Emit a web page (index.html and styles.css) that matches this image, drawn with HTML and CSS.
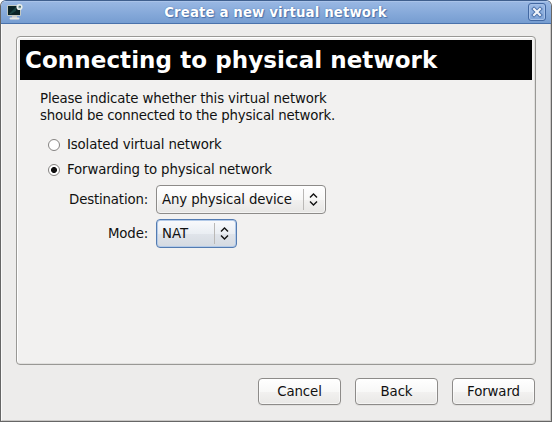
FILE: index.html
```html
<!DOCTYPE html>
<html lang="en">
<head>
<meta charset="utf-8">
<title>Create a new virtual network</title>
<link rel="stylesheet" href="styles.css">
</head>
<body>
<div class="window">
  <header class="titlebar">
    <svg class="app-icon" width="18" height="18" viewBox="0 0 18 18">
      <path d="M6 13h5v2H6z" fill="#c9cbc8"/>
      <path d="M4.500 15.500h8" stroke="#e6e7e4" stroke-width="2" stroke-linecap="round"/>
      <rect x="1.500" y="2.500" width="13" height="10" rx="0.500" fill="#d5d8d4" stroke="#c3c9c4"/>
      <rect x="2" y="3" width="12" height="9" fill="#0b2326"/>
      <path d="M3 11L10 4v4l-5 3z" fill="#1b4444"/>
      <circle cx="13.500" cy="4" r="2.300" fill="#9fb8b9" stroke="#e9edea" stroke-width="1.600"/>
      <circle cx="14" cy="3.700" r="0.900" fill="#426568"/>
    </svg>
    <h1 class="title">Create a new virtual network</h1>
    <button class="close" aria-label="Close">
      <svg width="12" height="12" viewBox="0 0 12 12">
        <path d="M3 3l6 6M9 3l-6 6" stroke="#4a70a9" stroke-width="4" stroke-linecap="square"/>
        <path d="M2.300 2.300l7.400 7.400M9.700 2.300l-7.400 7.400" stroke="#f0f4fa" stroke-width="2.200"/>
      </svg>
    </button>
  </header>
  <main class="content">
    <section class="page">
      <h2 class="banner">Connecting to physical network</h2>
      <div class="form">
        <p class="intro"><span class="intro-first">Please indicate whether this virtual network</span><br>should be connected to the physical network.</p>
        <div class="option"><span class="radio"></span><span>Isolated virtual network</span></div>
        <div class="option"><span class="radio checked"></span><span>Forwarding to physical network</span></div>
        <div class="fields">
          <span class="label">Destination:</span>
          <div class="combo combo-wide"><span class="value">Any physical device</span><span class="arrows"><svg width="9" height="13" viewBox="0 0 9 13"><path d="M1 4.500L4.500 1L8 4.500M1 8.500L4.500 12L8 8.500"/></svg></span></div>
          <span class="label">Mode:</span>
          <div class="combo combo-focus"><span class="value">NAT</span><span class="arrows"><svg width="9" height="13" viewBox="0 0 9 13"><path d="M1 4.500L4.500 1L8 4.500M1 8.500L4.500 12L8 8.500"/></svg></span></div>
        </div>
      </div>
    </section>
    <footer class="actions">
      <button class="btn">Cancel</button>
      <button class="btn">Back</button>
      <button class="btn">Forward</button>
    </footer>
  </main>
</div>
</body>
</html>
```
FILE: styles.css
```css
* { box-sizing: border-box; }

body {
  margin: 0;
  background: #fff;
  color: #111;
  font: 13.333px/17px "DejaVu Sans", sans-serif;
}

.window {
  width: 552px;
  height: 422px;
  display: flex;
  flex-direction: column;
  border: 1px solid #666;
  border-top-color: #3f5f8e;
  border-radius: 6px 6px 0 0;
  background: #edeceb;
  overflow: hidden;
}

.titlebar {
  height: 23px;
  display: flex;
  align-items: center;
  padding: 0 5px;
  border-top: 1px solid #a9c3e9;
  border-bottom: 1px solid #4a72ab;
  background: linear-gradient(#98b7e3, #769dd1);
}

.app-icon {
  display: block;
  margin: -1px 0 1px;
}

.title {
  flex: 1;
  margin: 0;
  padding-right: 1px;
  text-align: center;
  color: #fff;
  font-size: 13.333px;
  line-height: 20px;
  font-weight: bold;
  letter-spacing: 0.12px;
  text-shadow: 0 0 1px #3c64a0, 1px 1px 1px #4a72ab;
}

.close {
  width: 18px;
  height: 18px;
  margin: -1px 0 1px;
  padding: 0;
  display: flex;
  align-items: center;
  justify-content: center;
  border: 1px solid #4268a2;
  border-radius: 3px;
  background: linear-gradient(#9cbae5, #7da2d6);
  box-shadow: inset 0 0 0 1px #a5c0e7;
}

.content {
  flex: 1;
  display: flex;
  flex-direction: column;
  padding: 12px 15px 15px 14px;
  border: 1px solid #fafafa;
  border-width: 0 1px 1px;
  border-right-color: #c9c7c5;
  border-bottom-color: #c9c7c5;
}

.page {
  height: 329px;
  width: 520px;
  padding: 3px;
  border: 1px solid #999895;
  border-radius: 4px;
  background: #f2f1f0;
  box-shadow: inset 1px 1px 0 #fff, inset -1px -1px 0 #e1e0de;
}

.banner {
  height: 40px;
  margin: 0;
  padding-left: 5px;
  background: #000;
  color: #fff;
  font-size: 23px;
  line-height: 40px;
  font-weight: bold;
  letter-spacing: 0.07px;
  white-space: nowrap;
}

.form { padding: 10px 0 0 20px; }

.intro {
  margin: 0 0 8px;
  letter-spacing: -0.21px;
}

.intro-first { letter-spacing: -0.16px; }

.option {
  height: 25px;
  display: flex;
  align-items: center;
  gap: 7px;
  padding-left: 8px;
  letter-spacing: -0.14px;
}

.radio {
  width: 12px;
  height: 12px;
  margin-top: 1px;
  border: 1px solid #858381;
  border-radius: 50%;
  background: #fff;
}

.radio.checked { background: radial-gradient(circle at center, #111 0 2.600px, #fff 3.400px); }

.fields {
  display: grid;
  grid-template-columns: 108px 170px;
  grid-template-rows: 29px 29px;
  column-gap: 8px;
  row-gap: 5px;
  align-items: center;
  margin-top: 3px;
}

.label {
  text-align: right;
  letter-spacing: -0.17px;
}

.combo {
  height: 29px;
  display: flex;
  align-items: center;
  justify-content: space-between;
  padding: 3px 7px 3px 5px;
  border: 1px solid #8d8b89;
  border-radius: 4px;
  background: linear-gradient(#fff 0%, #f8f8f7 50%, #f2f1f0 51%, #e7e6e4 100%);
  box-shadow: inset 0 0 0 1px #fff8;
}

.combo-wide {
  width: 170px;
  letter-spacing: -0.13px;
}

.combo-focus {
  width: 81px;
  border-color: #537bb1;
  background: linear-gradient(#f9fafc 0%, #eaeef3 50%, #e0e4ea 51%, #d5dae1 100%);
  box-shadow: inset 0 0 0 1px #b3cae8;
}

.arrows {
  height: 21px;
  display: flex;
  align-items: center;
  padding-left: 5px;
  border-left: 1px solid #bab8b6;
}

.arrows path {
  fill: none;
  stroke: #111;
  stroke-width: 1.400;
}

.actions {
  display: flex;
  justify-content: flex-end;
  gap: 14px;
  margin-top: 13px;
}

.btn {
  width: 83px;
  height: 27px;
  padding: 0 0 1px;
  border: 1px solid #8d8b89;
  border-radius: 4px;
  background: linear-gradient(#fff 0%, #f8f8f7 50%, #f2f1f0 51%, #e9e8e6 100%);
  box-shadow: inset 0 0 0 1px #fff8, 0 1px 0 #e0dfdd;
  color: #111;
  font: inherit;
  letter-spacing: -0.1px;
}
```
